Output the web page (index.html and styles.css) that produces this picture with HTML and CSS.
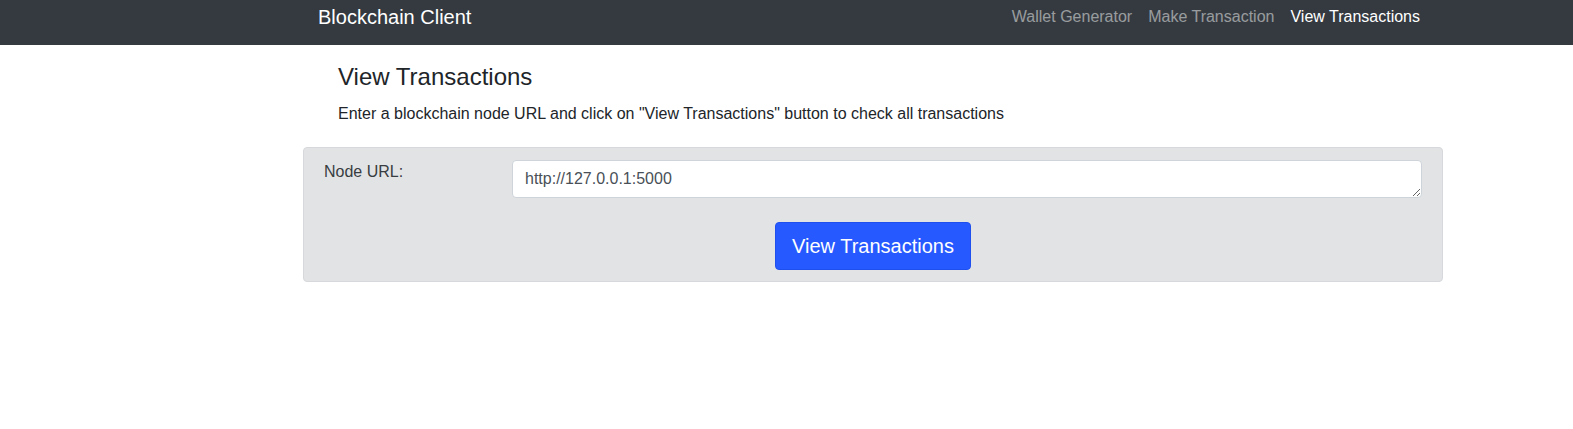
FILE: index.html
```html
<!DOCTYPE html>
<html lang="en">
<head>
<meta charset="utf-8">
<title>Blockchain Client</title>
<link rel="stylesheet" href="styles.css">
</head>
<body>
<nav class="navbar">
  <div class="container nav-inner">
    <a class="brand" href="#">Blockchain Client</a>
    <ul class="nav-links">
      <li><a class="nav-link" href="#">Wallet Generator</a></li>
      <li><a class="nav-link" href="#">Make Transaction</a></li>
      <li><a class="nav-link active" href="#">View Transactions</a></li>
    </ul>
  </div>
</nav>
<main class="container main">
  <div class="intro">
    <h4 class="title">View Transactions</h4>
    <p class="lead-text">Enter a blockchain node URL and click on "View Transactions" button to check all transactions</p>
  </div>
  <div class="card">
    <div class="form-row">
      <label class="label" for="node_url">Node URL:</label>
      <textarea id="node_url" class="input" rows="1">http://127.0.0.1:5000</textarea>
    </div>
    <div class="actions">
      <button class="btn" type="button">View Transactions</button>
    </div>
  </div>
</main>
</body>
</html>
```

FILE: styles.css
```css
* { box-sizing: border-box; }

html, body {
  margin: 0;
  padding: 0;
  background: #ffffff;
  font-family: "Liberation Sans", Arial, sans-serif;
  color: #212529;
}

.container {
  width: 1140px;
  margin-left: 303px;
}

.navbar {
  height: 45px;
  background: #343a40;
}

.nav-inner {
  display: flex;
  justify-content: space-between;
  align-items: flex-start;
  padding: 0 15px;
}

.brand {
  display: block;
  padding-top: 2px;
  font-size: 20px;
  line-height: 30px;
  color: #ffffff;
  text-decoration: none;
}

.nav-links {
  display: flex;
  list-style: none;
  margin: 0;
  padding: 0;
}

.nav-link {
  display: block;
  padding: 5px 8px 0;
  font-size: 16px;
  line-height: 24px;
  color: rgba(255, 255, 255, 0.5);
  text-decoration: none;
}

.nav-link.active {
  color: #ffffff;
}

.main {
  padding-top: 17px;
}

.intro {
  padding-left: 35px;
}

.title {
  margin: 0 0 11px;
  font-size: 24px;
  line-height: 29px;
  font-weight: 400;
}

.lead-text {
  margin: 0;
  font-size: 16px;
  line-height: 24px;
}

.card {
  margin-top: 21px;
  background: #e2e3e5;
  border: 1px solid #d6d8db;
  border-radius: 4px;
  padding: 12px 20px 11px;
}

.form-row {
  display: grid;
  grid-template-columns: 188px 1fr;
}

.label {
  font-size: 16px;
  line-height: 24px;
  color: #383d41;
}

.input {
  display: block;
  width: 100%;
  height: 38px;
  margin: 0;
  padding: 6px 12px;
  font-family: "Liberation Sans", Arial, sans-serif;
  font-size: 16px;
  line-height: 24px;
  color: #495057;
  background: #ffffff;
  border: 1px solid #ced4da;
  border-radius: 4px;
  resize: vertical;
  overflow: hidden;
}

.actions {
  display: flex;
  justify-content: center;
  margin-top: 24px;
}

.btn {
  padding: 8px 16px;
  font-family: "Liberation Sans", Arial, sans-serif;
  font-size: 20px;
  line-height: 30px;
  color: #ffffff;
  background: #2659ff;
  border: 1px solid #1f50ee;
  border-radius: 4px;
  cursor: pointer;
}
```
